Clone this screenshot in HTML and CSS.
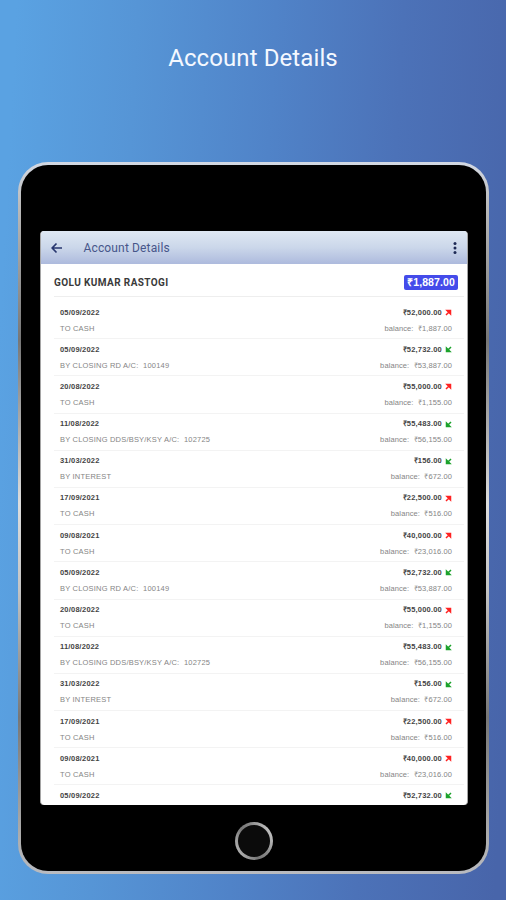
FILE: index.html
```html
<!DOCTYPE html>
<html lang="en">
<head>
    <meta charset="UTF-8">
    <meta name="viewport" content="width=device-width, initial-scale=1.0">
    <title>Account Details</title>
    <link rel="stylesheet" href="styles.css">
</head>
<body>
    <h1>Account Details</h1>

    <div class="tablet">
        <div class="screen">
            <div class="toolbar">
                <svg class="back" viewBox="0 0 12 12"><path d="M11 6H1.500M5.500 1.500L1.200 6l4.300 4.500"/></svg>
                <span class="title">Account Details</span>
                <svg class="menu" viewBox="0 0 4 14"><circle cx="2" cy="2.500" r="1.500"/><circle cx="2" cy="7" r="1.500"/><circle cx="2" cy="11.500" r="1.500"/></svg>
            </div>
            <div class="holder">
                <span class="name">GOLU KUMAR RASTOGI</span>
                <span class="total">₹1,887.00</span>
            </div>
            <div class="list" id="list"></div>
        </div>
        <div class="home"></div>
    </div>

    <script src="script.js"></script>
</body>
</html>
```
FILE: styles.css
```css
* {
    box-sizing: border-box;
}
body {
    margin: 0;
    height: 900px;
    overflow: hidden;
    font-family: "Liberation Sans", Arial, sans-serif;
    background: linear-gradient(93deg, #5aa2e2 3%, #5695d6 25%, #5083c8 50%, #4c72b8 73%, #4865aa 98%);
}
h1 {
    margin: 0;
    padding-top: 43px;
    height: 162px;
    font-family: Roboto, sans-serif;
    font-size: 24px;
    line-height: 30px;
    font-weight: 400;
    letter-spacing: 0.1px;
    text-align: center;
    color: #f4f8ff;
}
.tablet {
    width: 471px;
    height: 712px;
    margin-left: 18px;
    padding: 66px 18px 0 19px;
    border: 3px solid transparent;
    border-radius: 30px;
    background:
        linear-gradient(#000, #000) padding-box,
        linear-gradient(#d3d9e4, #bbb 6%, #777 25%, #ddd 48%, #c4c4c4 60%, #777 78%, #aaa 94%, #b9bbc0) border-box;
}
.screen {
    height: 574px;
    overflow: hidden;
    border-left: 1px solid #a5a5a5;
    border-right: 1px solid #a5a5a5;
    border-radius: 4px;
    background: #fff;
}
.toolbar {
    display: flex;
    align-items: center;
    height: 33px;
    padding: 0 10px;
    background: linear-gradient(#dfe8f3, #cbd7ea 50%, #adbadd);
}
.back {
    width: 12px;
    height: 12px;
    fill: none;
    stroke: #28376f;
    stroke-width: 1.7;
}
.title {
    flex: 1;
    margin-left: 20.5px;
    font-family: Roboto, sans-serif;
    font-size: 12px;
    letter-spacing: 0.15px;
    color: #47568a;
}
.menu {
    width: 4px;
    height: 14px;
    fill: #1d2955;
}
.holder {
    display: flex;
    align-items: center;
    justify-content: space-between;
    height: 33px;
    margin: 0 3px 0 13px;
    padding: 4px 6px 0 0;
    border-bottom: 1px solid #eee;
}
.name {
    font-family: Roboto, sans-serif;
    font-size: 10px;
    font-weight: 700;
    letter-spacing: 0.4px;
    color: #3a3a3a;
}
.total {
    width: 54px;
    height: 15px;
    border-radius: 2px;
    background: #444bea;
    font-size: 10.5px;
    line-height: 15px;
    font-weight: 700;
    letter-spacing: 0.1px;
    text-align: center;
    color: #fff;
}
.list {
    margin: 5px 3px 0 13px;
}
.entry {
    height: 37.2px;
    padding: 5.5px 12px 0 6px;
    border-bottom: 1px solid #f3f3f3;
}
.line {
    display: flex;
    align-items: center;
    justify-content: space-between;
    height: 10px;
    font-size: 7.5px;
    line-height: 10px;
    letter-spacing: 0.2px;
    white-space: pre;
}
.line.main {
    font-weight: 700;
    color: #444;
}
.line.note {
    margin-top: 6px;
    color: #858585;
}
.line .balance {
    letter-spacing: 0.1px;
}
.amount {
    display: flex;
    align-items: center;
}
.arrow {
    width: 7px;
    height: 7px;
    margin-left: 3px;
    stroke-width: 1.5;
}
.debit {
    fill: #f22;
    stroke: #f22;
}
.credit {
    fill: #1ca22c;
    stroke: #1ca22c;
}
.home {
    width: 38px;
    height: 38px;
    margin: 17px auto 0;
    border: 3px solid transparent;
    border-radius: 50%;
    background:
        linear-gradient(#0b0b0b, #0b0b0b) padding-box,
        linear-gradient(60deg, #ccc, #777 40%, #888 60%, #ddd) border-box;
}
```
FILE: script.js
```js
const entries = [
    ['05/09/2022', 'BY CLOSING RD A/C:  100149', '52,732.00', '53,887.00', 'credit'],
    ['20/08/2022', 'TO CASH', '55,000.00', '1,155.00', 'debit'],
    ['11/08/2022', 'BY CLOSING DDS/BSY/KSY A/C:  102725', '55,483.00', '56,155.00', 'credit'],
    ['31/03/2022', 'BY INTEREST', '156.00', '672.00', 'credit'],
    ['17/09/2021', 'TO CASH', '22,500.00', '516.00', 'debit'],
    ['09/08/2021', 'TO CASH', '40,000.00', '23,016.00', 'debit']
];

const arrows = {
    debit: 'M1 6L4 3M2 1.500H5.500V5z',
    credit: 'M6 1L3 4M5 5.500H1.500V2z'
};

function entryRow([date, note, amount, balance, type]) {
    const noteLine = note ? `
            <div class="line note">
                <span>${note}</span>
                <span class="balance">balance:  ₹${balance}</span>
            </div>` : '';
    return `
        <div class="entry">
            <div class="line main">
                <span>${date}</span>
                <span class="amount">₹${amount}<svg class="arrow ${type}" viewBox="0 0 7 7"><path d="${arrows[type]}"/></svg></span>
            </div>${noteLine}
        </div>`;
}

const rows = [
    ['05/09/2022', 'TO CASH', '52,000.00', '1,887.00', 'debit'],
    ...entries,
    ...entries,
    ['05/09/2022', '', '52,732.00', '', 'credit']
];
document.getElementById('list').innerHTML = rows.map(entryRow).join('');
```
